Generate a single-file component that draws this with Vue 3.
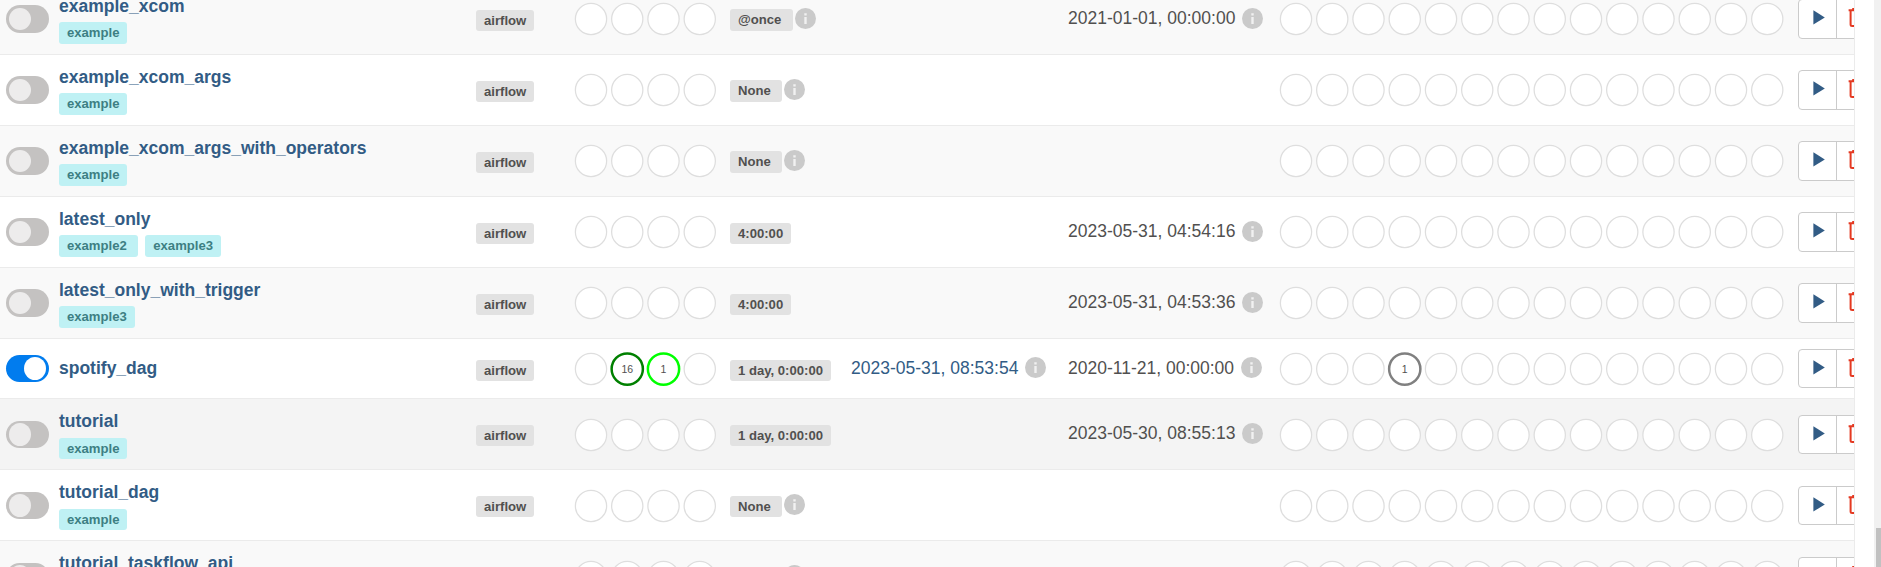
<script setup>
const rows = [
  { name: 'example_xcom', tags: ['example'], schedule: '@once', info: true, next: '2021-01-01, 00:00:00' },
  { name: 'example_xcom_args', tags: ['example'], schedule: 'None', info: true },
  { name: 'example_xcom_args_with_operators', tags: ['example'], schedule: 'None', info: true },
  { name: 'latest_only', tags: ['example2', 'example3'], schedule: '4:00:00', next: '2023-05-31, 04:54:16' },
  { name: 'latest_only_with_trigger', tags: ['example3'], schedule: '4:00:00', next: '2023-05-31, 04:53:36' },
  {
    name: 'spotify_dag', tags: [], schedule: '1 day, 0:00:00', on: true, kind: 'compact',
    last: '2023-05-31, 08:53:54', next: '2020-11-21, 00:00:00',
    runs: { 1: { n: 16, c: 'success' }, 2: { n: 1, c: 'running' } },
    tasks: { 3: { n: 1, c: 'queued' } },
  },
  { name: 'tutorial', tags: ['example'], schedule: '1 day, 0:00:00', next: '2023-05-30, 08:55:13', kind: 'low hover' },
  { name: 'tutorial_dag', tags: ['example'], schedule: 'None', info: true, kind: 'low' },
  { name: 'tutorial_taskflow_api', tags: ['example'], schedule: 'None', info: true, kind: 'low' },
]
const groups = (r) => [
  { key: 'runs', count: 4, data: r.runs || {} },
  { key: 'tasks', count: 14, data: r.tasks || {} },
]
</script>

<template>
  <div class="page">
    <div class="table">
      <div v-for="(r, i) in rows" :key="r.name" class="row" :class="[r.kind, { odd: i % 2 === 0 }]">
        <div class="toggle" :class="{ on: r.on }"><span class="knob"></span></div>
        <div class="dag">
          <a class="name">{{ r.name }}</a>
          <div v-if="r.tags.length" class="tags">
            <span v-for="t in r.tags" :key="t" class="tag">{{ t }}</span>
          </div>
        </div>
        <div class="owner"><span class="label">airflow</span></div>
        <template v-for="g in groups(r)" :key="g.key">
          <svg class="circles" :class="g.key" :width="g.count * 36.25" height="36">
            <g v-for="k in g.count" :key="k">
              <circle :class="g.data[k - 1]?.c" :cx="(k - 1) * 36.25 + 18" cy="18" r="15.625" />
              <text v-if="g.data[k - 1]" :x="(k - 1) * 36.25 + 18" y="21.7">{{ g.data[k - 1].n }}</text>
            </g>
          </svg>
        </template>
        <div class="schedule">
          <span class="label" :class="{ spaced: r.info }">{{ r.schedule }}</span>
          <svg v-if="r.info" class="info" viewBox="0 0 21 21"><circle cx="10.5" cy="10.5" r="10.5" /><path d="M9.3 5.2h2.4v2.3H9.3zM9.3 9h2.4v7H9.3z" /></svg>
        </div>
        <div v-for="c in ['last', 'next']" :key="c" class="date" :class="c">
          <template v-if="r[c]">
            <span>{{ r[c] }}</span>
            <svg class="info" viewBox="0 0 21 21"><circle cx="10.5" cy="10.5" r="10.5" /><path d="M9.3 5.2h2.4v2.3H9.3zM9.3 9h2.4v7H9.3z" /></svg>
          </template>
        </div>
        <div class="actions">
          <div class="btn"><svg width="12" height="15"><path class="play" d="M.4.3 11.8 7.4.4 14.6z" /></svg></div>
          <div class="btn del"><svg width="18" height="20"><path class="trash" d="M.6 2.3h16M5.2 2.3V1h6.6v1.3M2.6 3v13.5q0 1.5 1.5 1.5h9q1.5 0 1.5-1.5V3" /></svg></div>
        </div>
      </div>
    </div>
    <div class="scroll"><div class="thumb"></div></div>
  </div>
</template>

<style>
body { overflow: hidden; }
</style>

<style scoped>
.page { display: flex; height: 567px; overflow: hidden; background: #fff; font-family: "Liberation Sans", Arial, sans-serif; font-size: 17.5px; color: #51504f; }
.table { box-sizing: border-box; width: 1855px; height: 567px; overflow: hidden; border-right: 1px solid #ebebeb; }
.row {
  --s: 0px;
  display: grid;
  grid-template-columns: 59px 417px 97px 157px 121px 217px 210px 520px 120px;
  grid-template-areas: "toggle dag owner runs schedule last next tasks actions";
  align-items: start;
  box-sizing: border-box;
  height: 71px;
  border-top: 1px solid #ebebeb;
  background: #fff;
}
.row:first-child { margin-top: -17px; }
.row.odd { background: #f9f9f9; }
.row.compact { --s: -5px; height: 60px; }
.row.hover { background: #f4f4f4; }
.toggle { grid-area: toggle; box-sizing: border-box; width: 43px; height: 28px; margin: 21px 0 0 6px; padding: 3px; border-radius: 14px; background: #c4c2c1; }
.knob { display: block; width: 22px; height: 22px; border-radius: 50%; background: #edecec; }
.toggle.on { margin-top: 16px; background: #017cee; }
.toggle.on .knob { margin-left: 15px; background: #fff; }
.compact .toggle, .low .toggle { height: 27px; padding-top: 2px; }
.low .toggle { margin-top: 22px; }
.compact .knob, .low .knob { height: 23px; }
.dag { grid-area: dag; padding-top: 12px; }
.compact .dag { padding-top: 19px; }
.name { display: block; height: 20px; line-height: 20px; font-weight: bold; color: #325c85; }
.tags { display: flex; gap: 7px; margin-top: 6px; }
.tag, .label { display: block; box-sizing: border-box; font-size: 13.125px; font-weight: bold; border-radius: 3px; white-space: nowrap; }
.tag { height: 22px; padding: 0 8px; line-height: 21px; background: #bff1f4; color: #3d7f83; }
.tag:not(:last-child) { padding-right: 11.5px; }
.low .tags { margin-top: 7px; }
.low .tag { height: 21px; }
.owner { grid-area: owner; padding-top: calc(26px + var(--s)); }
.label { width: max-content; height: 21px; padding: 0 8px; line-height: 21px; background: #e2e2e2; color: #51504f; }
.schedule { grid-area: schedule; display: flex; gap: 2px; padding-top: calc(26px + var(--s)); }
.label.spaced { height: 22px; margin-top: -1px; padding-right: 11.5px; }
.low .label.spaced { height: 21px; margin-top: 0; }
.info { flex: none; width: 21px; height: 21px; }
.schedule .info { margin-top: -2px; }
.info circle { fill: #cacaca; }
.info path { fill: #f1f1f1; }
.circles { margin-top: calc(17px + var(--s)); overflow: visible; }
.low .circles { margin-top: 17.5px; }
.runs { grid-area: runs; margin-left: -.5px; }
.tasks { grid-area: tasks; margin-left: -.1px; }
.circles circle { fill: #fff; stroke: #dedede; stroke-width: 1.25; }
.circles .success { stroke: #008000; stroke-width: 2.5; }
.circles .running { stroke: #00ff00; stroke-width: 2.5; }
.circles .queued { stroke: #808080; stroke-width: 2.5; }
.circles text { font-size: 10.5px; text-anchor: middle; fill: #51504f; }
.date { display: flex; gap: 7px; padding-top: calc(24px + var(--s)); line-height: 20px; white-space: nowrap; }
.compact .date { padding-top: 18px; }
.compact .date span { padding-top: 1px; }
.last { grid-area: last; color: #325c85; }
.next { grid-area: next; }
.actions { grid-area: actions; display: flex; box-sizing: border-box; width: 120px; height: 40px; margin-top: calc(15px + var(--s)); border: 1px solid #cbcbcb; border-radius: 4px; background: #fff; }
.compact .actions { height: 39px; }
.btn { box-sizing: border-box; width: 38px; padding: 10px 0 0 14px; border-right: 1px solid #cbcbcb; }
.btn svg { display: block; }
.del { padding: 8px 0 0 11px; }
.play { fill: #325c85; }
.trash { fill: none; stroke: #e43921; stroke-width: 2; }
.low .actions { margin-top: 16px; height: 39px; }
.scroll { display: flow-root; width: 7px; height: 567px; margin-left: 19px; background: #f1f1f1; }
.thumb { height: 39px; margin: 528px 0 0 2px; background: #c1c1c1; }
</style>
